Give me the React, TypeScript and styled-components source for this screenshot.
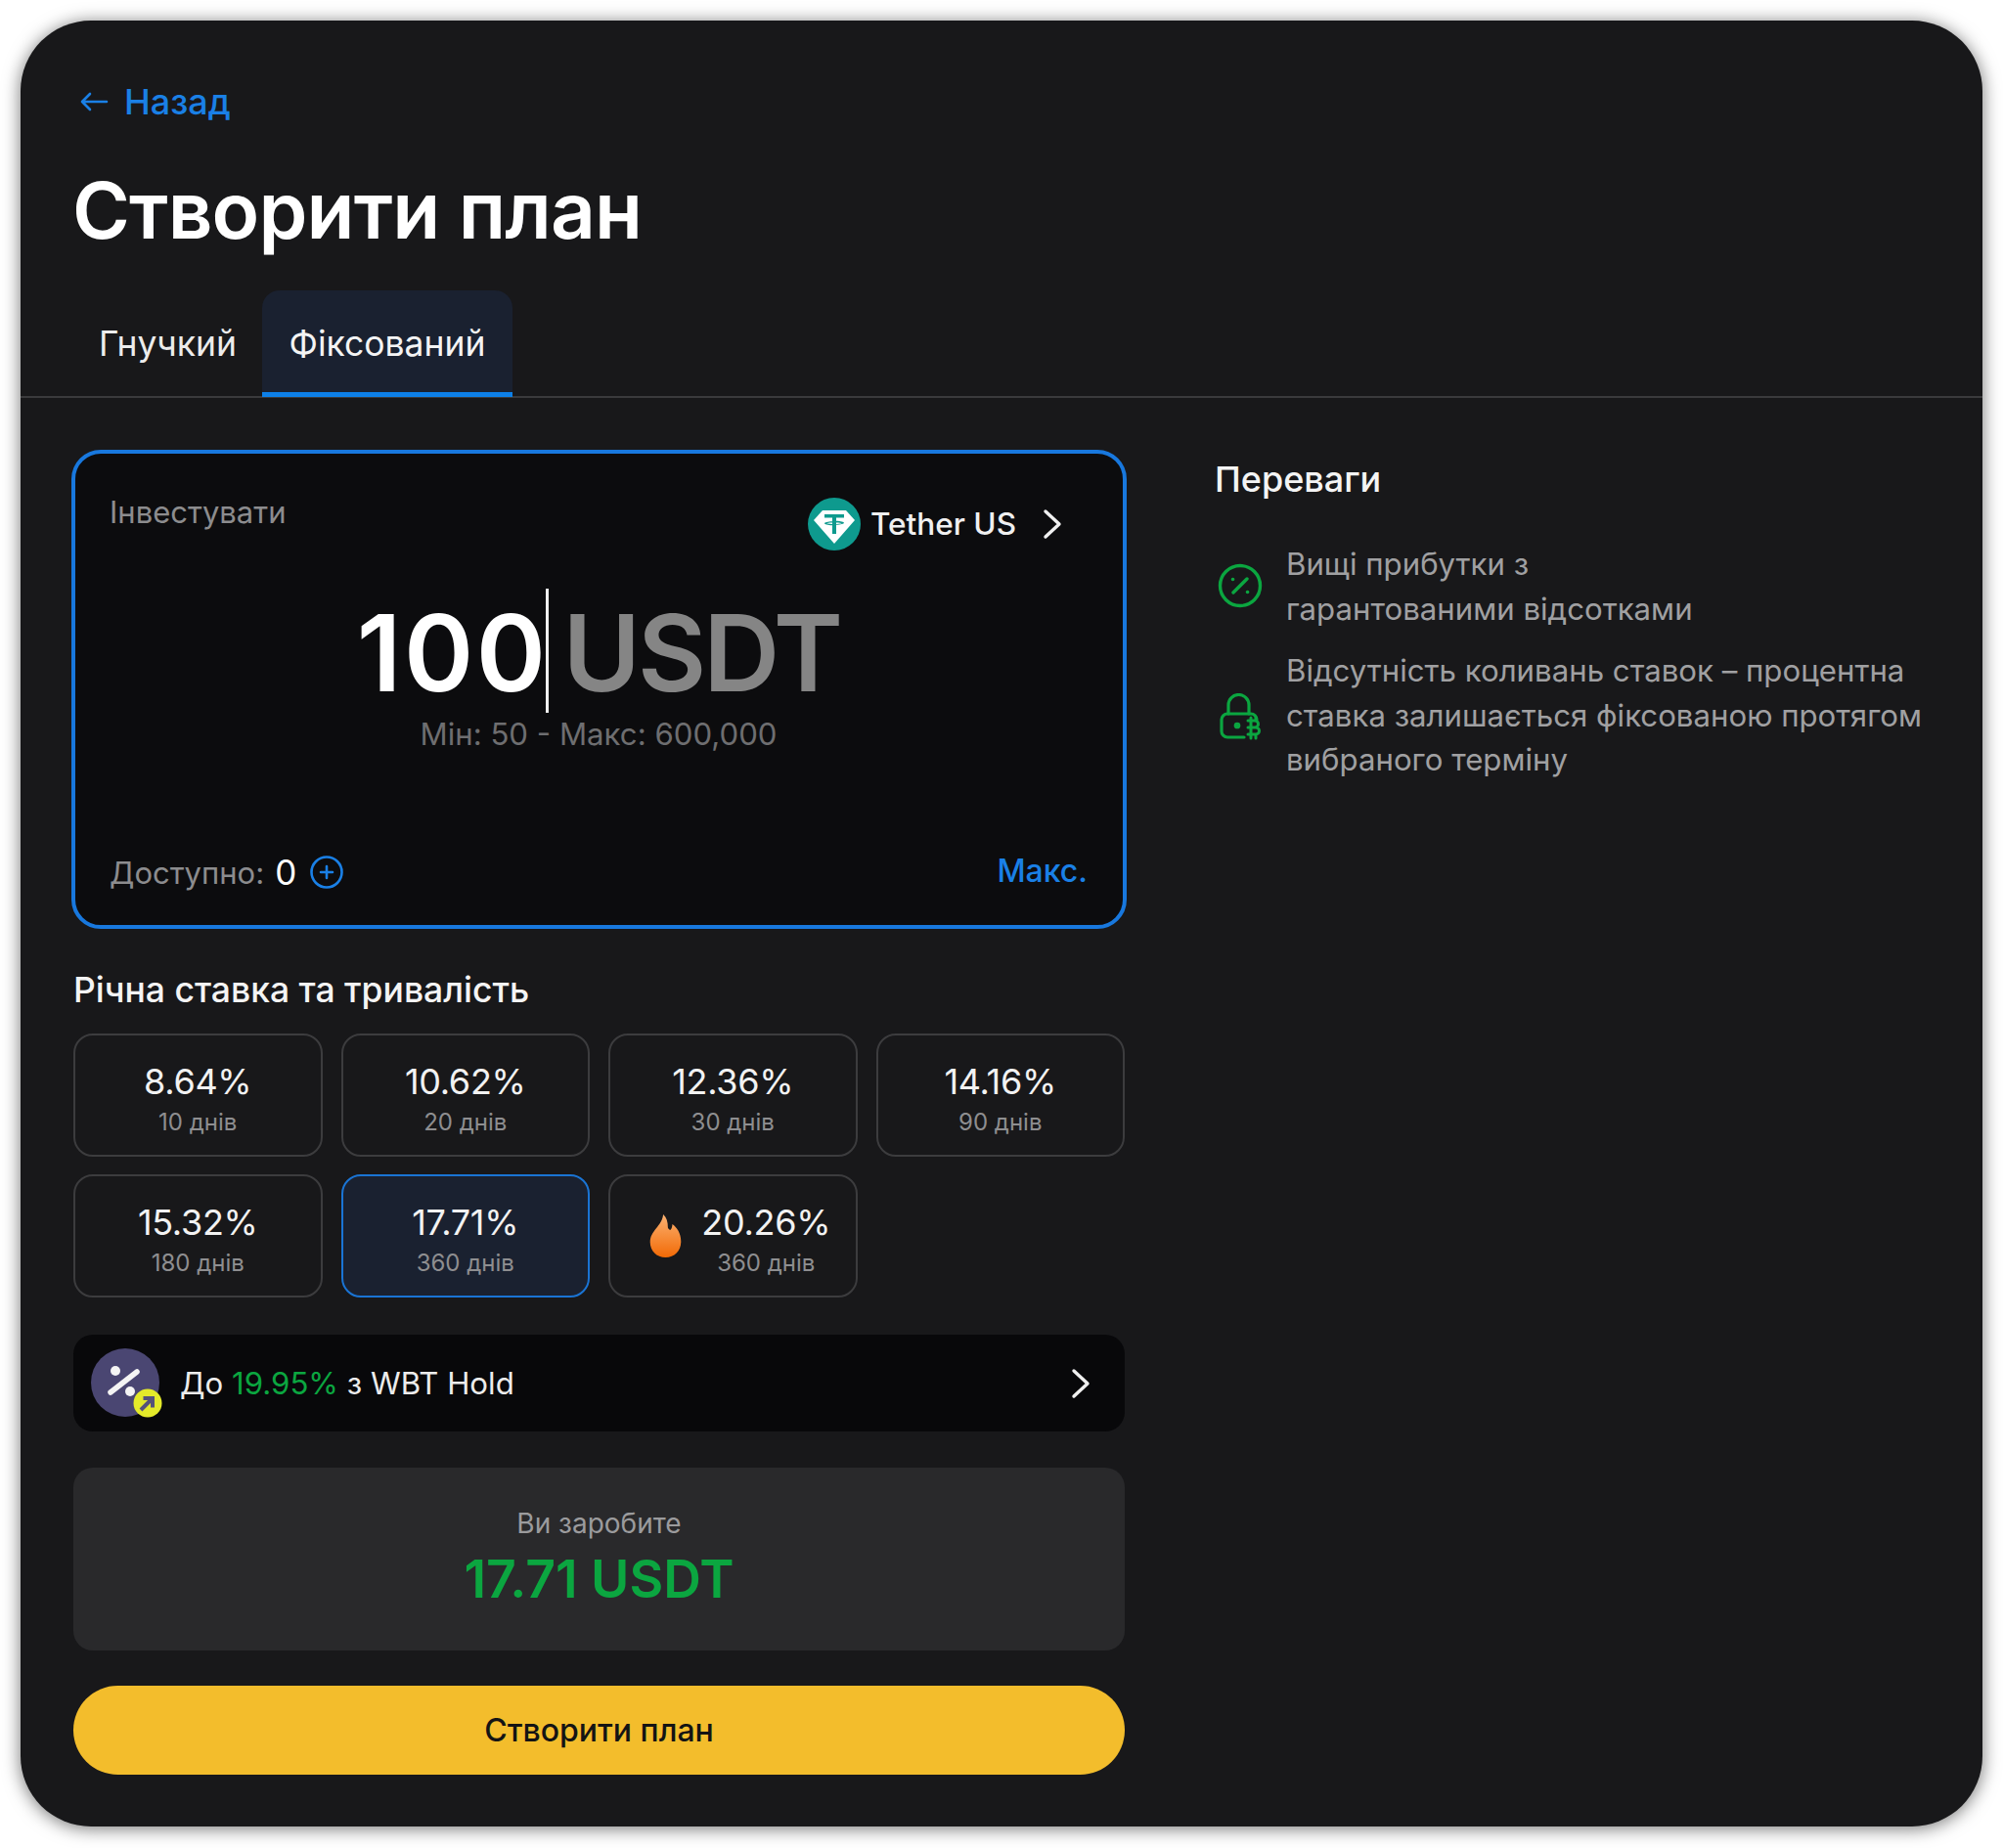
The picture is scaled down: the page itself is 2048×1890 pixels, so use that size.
import * as React from 'react';
import styled, { createGlobalStyle } from 'styled-components';

const GlobalStyle = createGlobalStyle`
  html, body {
    margin: 0;
    padding: 0;
    background: #ffffff;
  }
  * {
    box-sizing: border-box;
  }
`;

const Page = styled.div`
  width: 2048px;
  height: 1890px;
  padding: 21px;
  font-family: Inter, 'Liberation Sans', sans-serif;
`;

const Panel = styled.div`
  width: 2006px;
  height: 1847px;
  background: #18181a;
  border-radius: 72px;
  box-shadow: 0 2px 18px rgba(0, 0, 0, 0.55);
  padding-top: 61px;
  overflow: hidden;
`;

const Header = styled.div`
  padding: 0 54px;
`;

const BackLink = styled.div`
  display: flex;
  align-items: center;
  gap: 16px;
  height: 44px;
  padding-left: 6px;
  color: #1a80e6;
  font-size: 36px;
  font-weight: 500;
`;

const Title = styled.h1`
  margin: 41px 0 0 -1px;
  color: #ffffff;
  font-size: 80px;
  line-height: 96px;
  font-weight: 600;
  letter-spacing: -0.85px;
`;

const Tabs = styled.div`
  display: flex;
  height: 110px;
  margin-top: 34px;
  padding: 0 54px;
  border-bottom: 2px solid #3a3a3c;
`;

const Tab = styled.div<{ $active?: boolean }>`
  display: flex;
  align-items: center;
  height: 109px;
  padding: ${(p) => (p.$active ? '0 27.5px' : '0 26px')};
  color: ${(p) => (p.$active ? '#f4f4f4' : '#ececec')};
  font-size: 35.5px;
  font-weight: 400;
  border-radius: 18px 18px 0 0;
  background: ${(p) => (p.$active ? '#1a2130' : 'transparent')};
  box-shadow: ${(p) => (p.$active ? 'inset 0 -5px 0 #0d80e8' : 'none')};
`;

const Body = styled.div`
  display: grid;
  grid-template-columns: 1079px 1fr;
  column-gap: 90px;
  padding: 53px 0 0 52px;
`;

const LeftColumn = styled.div`
  display: flex;
  flex-direction: column;
`;

const InvestCard = styled.div`
  display: flex;
  flex-direction: column;
  height: 490px;
  background: #0c0c0e;
  border: 4px solid #1878de;
  border-radius: 30px;
  padding: 0 36px 0 35px;
`;

const InvestTop = styled.div`
  display: flex;
  justify-content: space-between;
  align-items: flex-start;
`;

const InvestLabel = styled.div`
  margin-top: 41px;
  color: #8c8c8e;
  font-size: 31px;
  line-height: 38px;
`;

const CoinPicker = styled.div`
  display: flex;
  align-items: center;
  margin-top: 44px;
  padding-right: 25px;
  color: #f0f0f0;
  font-size: 31.5px;
  font-weight: 500;
  line-height: 56px;
`;

const CoinName = styled.span`
  margin: 0 26px 0 10px;
`;

const AmountRow = styled.div`
  display: flex;
  justify-content: center;
  align-items: center;
  margin-top: 38px;
  height: 127px;
  font-size: 108px;
  font-weight: 600;
  letter-spacing: -3px;
`;

const AmountValue = styled.span`
  padding-top: 4px;
  color: #ffffff;
  letter-spacing: 2.5px;
`;

const Caret = styled.span`
  width: 3px;
  height: 127px;
  margin: 0 15px 0 -3px;
  background: #f0f0f0;
`;

const AmountUnit = styled.span`
  padding-top: 4px;
  color: #858585;
`;

const Limits = styled.div`
  margin-top: 3px;
  text-align: center;
  color: #6e6e70;
  font-size: 31.2px;
  line-height: 38px;
`;

const InvestBottom = styled.div`
  display: flex;
  justify-content: space-between;
  align-items: center;
  margin-top: auto;
  margin-bottom: 32px;
  height: 44px;
`;

const Available = styled.div`
  display: flex;
  align-items: center;
  color: #8c8c8e;
  font-size: 31px;
`;

const AvailableValue = styled.span`
  margin: 0 14px 0 11px;
  color: #ffffff;
  font-size: 35px;
`;

const MaxLink = styled.div`
  margin-bottom: 4px;
  color: #1a80e6;
  font-size: 32px;
  font-weight: 500;
`;

const SectionTitle = styled.div`
  margin: 42px 0 0 2px;
  color: #f4f4f4;
  font-size: 35.5px;
  line-height: 42px;
  font-weight: 500;
`;

const RateGrid = styled.div`
  display: grid;
  grid-template-columns: repeat(4, 1fr);
  grid-auto-rows: 126px;
  gap: 18px 19px;
  width: 1075px;
  margin: 23px 0 0 2px;
`;

const RateCard = styled.div<{ $selected?: boolean; $hot?: boolean }>`
  display: flex;
  justify-content: center;
  align-items: center;
  gap: 20px;
  padding-left: ${(p) => (p.$hot ? '15px' : '0')};
  border-radius: 20px;
  border: 2px solid ${(p) => (p.$selected ? '#1a74d4' : '#3c3c3e')};
  background: ${(p) => (p.$selected ? '#1a2130' : 'transparent')};
`;

const RateText = styled.div`
  display: flex;
  flex-direction: column;
  align-items: center;
  padding-top: 5px;
`;

const RateValue = styled.div`
  color: #f2f2f2;
  font-size: 36px;
  line-height: 48px;
  letter-spacing: -0.3px;
`;

const RateTerm = styled.div`
  margin-top: 2px;
  color: #8e8e90;
  font-size: 24px;
  line-height: 32px;
`;

const HoldRow = styled.div`
  display: flex;
  align-items: center;
  height: 99px;
  margin: 38px 0 0 2px;
  padding: 0 34px 0 18px;
  width: 1075px;
  border-radius: 20px;
  background: #08080a;
  color: #ececec;
  font-size: 31.2px;
  font-weight: 400;
`;

const HoldBadge = styled.div`
  position: relative;
  width: 72px;
  height: 72px;
  margin-right: 19px;
  flex: none;
`;

const HoldText = styled.div`
  flex: 1;
`;

const Green = styled.span`
  color: #0ba640;
`;

const EarnBox = styled.div`
  display: flex;
  flex-direction: column;
  align-items: center;
  justify-content: center;
  width: 1075px;
  height: 187px;
  margin: 37px 0 0 2px;
  border-radius: 20px;
  background: #29292b;
`;

const EarnLabel = styled.div`
  margin-top: -2px;
  color: #9b9b9d;
  font-size: 28px;
  line-height: 36px;
`;

const EarnValue = styled.div`
  margin-top: 7px;
  color: #0ba640;
  font-size: 53.5px;
  line-height: 64px;
  font-weight: 600;
`;

const CreateButton = styled.button`
  width: 1075px;
  height: 91px;
  margin: 36px 0 0 2px;
  border: none;
  border-radius: 46px;
  background: #f3bd2c;
  color: #141414;
  font-family: inherit;
  font-size: 32px;
  font-weight: 500;
`;

const RightColumn = styled.div`
  padding-top: 9px;
`;

const BenefitsTitle = styled.div`
  color: #f4f4f4;
  font-size: 36px;
  line-height: 42px;
  font-weight: 500;
`;

const BenefitList = styled.div`
  display: flex;
  flex-direction: column;
  gap: 18px;
  margin-top: 44px;
`;

const Benefit = styled.div`
  display: flex;
  align-items: center;
  gap: 22px;
`;

const BenefitIcon = styled.div<{ $shift: number; $indent?: number }>`
  flex: none;
  width: 51px;
  display: flex;
  justify-content: center;
  margin-top: ${(p) => p.$shift}px;
  padding-left: ${(p) => p.$indent || 0}px;
`;

const BenefitText = styled.div`
  color: #a0a0a2;
  font-size: 31.2px;
  line-height: 45.5px;
  white-space: pre-line;
`;

const BackArrow = () => (
  <svg width="30" height="24" viewBox="0 0 30 24" fill="none" stroke="#1a80e6" strokeWidth="2.6" strokeLinecap="round" strokeLinejoin="round">
    <path d="M28 12H3M11 4l-8 8 8 8" />
  </svg>
);

const Chevron = ({ color = '#f0f0f0' }: { color?: string }) => (
  <svg width="22" height="32" viewBox="0 0 22 32" fill="none" stroke={color} strokeWidth="3.4" strokeLinecap="round" strokeLinejoin="round">
    <path d="M4 3l14 13L4 29" />
  </svg>
);

const TetherIcon = () => (
  <svg width="54" height="54" viewBox="0 0 54 54">
    <circle cx="27" cy="27" r="27" fill="#0e9a8e" />
    <path d="M15 13h24l9 10-21 24L6 23z" fill="#ffffff" />
    <path d="M17 17h20v3.500h-8v3.300c4.600.2 8 1 8 2s-3.400 1.800-8 2V37h-4v-8.700c-4.600-.2-8-1-8-2s3.400-1.800 8-2v-3.800h-8z" fill="#0e9a8e" />
    <path d="M25 25.600c-2.900.1-5 .4-5.800.7 1.500.5 4.400.8 7.800.8s6.300-.3 7.800-.8c-.8-.3-2.900-.6-5.800-.7v1.300h-4z" fill="#ffffff" />
  </svg>
);

const PlusCircle = () => (
  <svg width="34" height="34" viewBox="0 0 34 34" fill="none" stroke="#1a80e6" strokeWidth="2.6" strokeLinecap="round">
    <circle cx="17" cy="17" r="15.500" />
    <path d="M17 11v12M11 17h12" />
  </svg>
);

const Flame = () => (
  <svg width="33" height="44" viewBox="0 0 33 46">
    <defs>
      <linearGradient id="flame" x1="0" y1="0" x2="0" y2="1">
        <stop offset="0" stopColor="#fbb272" />
        <stop offset="1" stopColor="#f26a06" />
      </linearGradient>
    </defs>
    <path d="M14 0c3.500 3 5 8 5 14 .6 1.500 1.600 2.500 3 2.500 1.200-1.500 1.600-3.500 1.800-6C28.500 14 33 20 33 29c0 10-7 17-16.500 17S0 39 0 29.500c0-6 3-10 6.500-14.500C10 10.500 13.500 6 14 0z" fill="url(#flame)" />
  </svg>
);

const PercentCircle = () => (
  <svg width="46" height="46" viewBox="0 0 46 46" fill="none" stroke="#0ba640" strokeWidth="3.4" strokeLinecap="round">
    <circle cx="23" cy="23" r="20.500" />
    <path d="M16 30l14-14" />
    <path d="M15.500 16.500h.1M30.500 29.500h.1" strokeWidth="3.600" />
  </svg>
);

const LockBitcoin = () => (
  <svg width="44" height="50" viewBox="0 0 44 50" fill="none" stroke="#0ba640" strokeWidth="3.2" strokeLinecap="round" strokeLinejoin="round">
    <path d="M9 21v-9a10.500 10.500 0 0 1 21 0v9" />
    <path d="M25 45H8a6 6 0 0 1-6-6V27a6 6 0 0 1 6-6h24a6 6 0 0 1 6 6" />
    <circle cx="18" cy="33" r="2.600" fill="#0ba640" strokeWidth="1.500" />
    <path d="M29 28h7a3.500 3.500 0 0 1 0 7h-7m0 0h8a3.500 3.500 0 0 1 0 7h-8M32 28v14M32 28v-3M37 28v-3M32 42v4M37 42v4" strokeWidth="3" />
  </svg>
);

const HoldIcon = () => (
  <HoldBadge>
    <svg width="73" height="72" viewBox="0 0 73 72">
      <circle cx="35" cy="35" r="35" fill="#4a4672" />
      <path d="M20 45l27-21" stroke="#f4f4f4" strokeWidth="5.500" strokeLinecap="round" fill="none" />
      <circle cx="25" cy="23" r="5" fill="#f4f4f4" />
      <circle cx="40" cy="44" r="5" fill="#f4f4f4" />
      <circle cx="58" cy="56" r="14.500" fill="#e4ea2a" />
      <path d="M51 63l12-12m-9.500 0H63v9.500" stroke="#55527a" strokeWidth="4" fill="none" />
    </svg>
  </HoldBadge>
);

const rates = [
  { value: '8.64%', term: '10 днів' },
  { value: '10.62%', term: '20 днів' },
  { value: '12.36%', term: '30 днів' },
  { value: '14.16%', term: '90 днів' },
  { value: '15.32%', term: '180 днів' },
  { value: '17.71%', term: '360 днів', selected: true },
  { value: '20.26%', term: '360 днів', hot: true },
];

const App = () => (
  <Page>
    <GlobalStyle />
    <Panel>
      <Header>
        <BackLink>
          <BackArrow />
          Назад
        </BackLink>
        <Title>Створити план</Title>
      </Header>
      <Tabs>
        <Tab>Гнучкий</Tab>
        <Tab $active>Фіксований</Tab>
      </Tabs>
      <Body>
        <LeftColumn>
          <InvestCard>
            <InvestTop>
              <InvestLabel>Інвестувати</InvestLabel>
              <CoinPicker>
                <TetherIcon />
                <CoinName>Tether US</CoinName>
                <Chevron />
              </CoinPicker>
            </InvestTop>
            <AmountRow>
              <AmountValue>100</AmountValue>
              <Caret />
              <AmountUnit>USDT</AmountUnit>
            </AmountRow>
            <Limits>Мін: 50 - Макс: 600,000</Limits>
            <InvestBottom>
              <Available>
                Доступно:
                <AvailableValue>0</AvailableValue>
                <PlusCircle />
              </Available>
              <MaxLink>Макс.</MaxLink>
            </InvestBottom>
          </InvestCard>
          <SectionTitle>Річна ставка та тривалість</SectionTitle>
          <RateGrid>
            {rates.map((rate) => (
              <RateCard key={rate.value} $selected={rate.selected} $hot={rate.hot}>
                {rate.hot && <Flame />}
                <RateText>
                  <RateValue>{rate.value}</RateValue>
                  <RateTerm>{rate.term}</RateTerm>
                </RateText>
              </RateCard>
            ))}
          </RateGrid>
          <HoldRow>
            <HoldIcon />
            <HoldText>
              До <Green>19.95%</Green> з WBT Hold
            </HoldText>
            <Chevron />
          </HoldRow>
          <EarnBox>
            <EarnLabel>Ви заробите</EarnLabel>
            <EarnValue>17.71 USDT</EarnValue>
          </EarnBox>
          <CreateButton>Створити план</CreateButton>
        </LeftColumn>
        <RightColumn>
          <BenefitsTitle>Переваги</BenefitsTitle>
          <BenefitList>
            <Benefit>
              <BenefitIcon $shift={-4}>
                <PercentCircle />
              </BenefitIcon>
              <BenefitText>{'Вищі прибутки з\nгарантованими відсотками'}</BenefitText>
            </Benefit>
            <Benefit>
              <BenefitIcon $shift={3} $indent={2}>
                <LockBitcoin />
              </BenefitIcon>
              <BenefitText>{'Відсутність коливань ставок – процентна\nставка залишається фіксованою протягом\nвибраного терміну'}</BenefitText>
            </Benefit>
          </BenefitList>
        </RightColumn>
      </Body>
    </Panel>
  </Page>
);

export default App;
